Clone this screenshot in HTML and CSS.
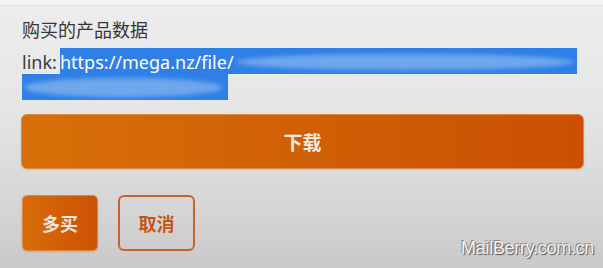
FILE: index.html
```html
<!DOCTYPE html>
<html lang="zh-CN">
<head>
    <meta charset="UTF-8">
    <meta name="viewport" content="width=device-width, initial-scale=1.0">
    <title>购买的产品数据</title>
    <link rel="stylesheet" href="styles.css">
</head>
<body>
    <div class="topbar"></div>
    <div class="container">
        <h1 class="title">购买的产品数据</h1>
        <div class="link-row">
            <span class="link-label">link:</span>
            <span class="sel sel-first">https://mega.nz/file/<span class="smear smear-first"></span></span>
        </div>
        <div class="link-row">
            <span class="sel sel-second"><span class="smear smear-second"></span></span>
        </div>
        <button class="btn-download">下载</button>
        <div class="actions">
            <button class="btn-buy">多买</button>
            <button class="btn-cancel">取消</button>
        </div>
    </div>
    <div class="watermark">MailBerry.com.cn</div>
</body>
</html>
```

FILE: styles.css
```css
html, body {
    height: 100%;
}
body {
    margin: 0;
    padding: 0;
    font-family: "Noto Sans", "Noto Sans CJK SC", sans-serif;
    background: linear-gradient(to bottom, #ededed 0%, #e6e6e6 40%, #d4d4d4 80%, #c9c9c9 100%);
    overflow: hidden;
    position: relative;
}
.topbar {
    height: 5px;
    background: #f3f3f3;
    border-bottom: 1px solid #e2e2e2;
}
.container {
    padding: 0 19px 0 21px;
}
.title {
    margin: 11px 0 0 1px;
    font-size: 18px;
    font-weight: normal;
    line-height: 26px;
    color: #363636;
}
.link-row {
    display: flex;
    height: 26px;
    align-items: stretch;
}
.link-row:first-of-type {
    margin-top: 5px;
}
.link-label {
    font-size: 18px;
    line-height: 28px;
    color: #3a3a3a;
    padding-left: 1px;
    width: 38px;
}
.sel {
    display: flex;
    align-items: center;
    background: #2f80e6;
    color: #ffffff;
    font-size: 18px;
    line-height: 26px;
    overflow: hidden;
    white-space: nowrap;
}
.sel-first {
    width: 517px;
    padding-top: 2px;
    box-sizing: border-box;
}
.sel-second {
    width: 206px;
    margin-left: 1px;
}
.smear {
    display: inline-block;
    height: 16px;
    border-radius: 50%;
    background: #6fa6ec;
    filter: blur(2px);
}
.smear-first {
    flex: 1;
    margin: 0 3px 0 2px;
}
.smear-second {
    width: 198px;
    margin-left: 2px;
    height: 19px;
}
button {
    font-family: "Noto Sans CJK SC", sans-serif;
    font-weight: bold;
    font-size: 18px;
    cursor: pointer;
}
.btn-download {
    display: block;
    width: 100%;
    height: 55px;
    margin-top: 14px;
    border: 1px solid #df8a3c;
    border-radius: 6px;
    background: linear-gradient(to right, #d87008, #ca4f02);
    color: #f3ebe3;
    font-size: 19px;
    box-shadow: 0 1px 2px rgba(0, 0, 0, 0.12);
}
.actions {
    display: flex;
    gap: 20px;
    margin-top: 26px;
    padding-left: 1px;
}
.btn-buy {
    width: 76px;
    height: 56px;
    border: 1px solid #de8640;
    border-radius: 5px;
    background: linear-gradient(to right, #d86c08, #cc5204);
    color: #f1e6dc;
    box-shadow: 0 1px 2px rgba(0, 0, 0, 0.15);
}
.btn-cancel {
    width: 77px;
    height: 56px;
    border: 2px solid #c8622c;
    border-radius: 6px;
    background: transparent;
    color: #c65418;
}
.watermark {
    position: absolute;
    right: 9px;
    bottom: 9px;
    font-family: "Liberation Sans", Arial, sans-serif;
    font-size: 18px;
    color: #f2f2f2;
    letter-spacing: -0.3px;
    text-shadow: -1px -1px 0 #8a8a8a, 1px 1px 1px #555555;
}
```
